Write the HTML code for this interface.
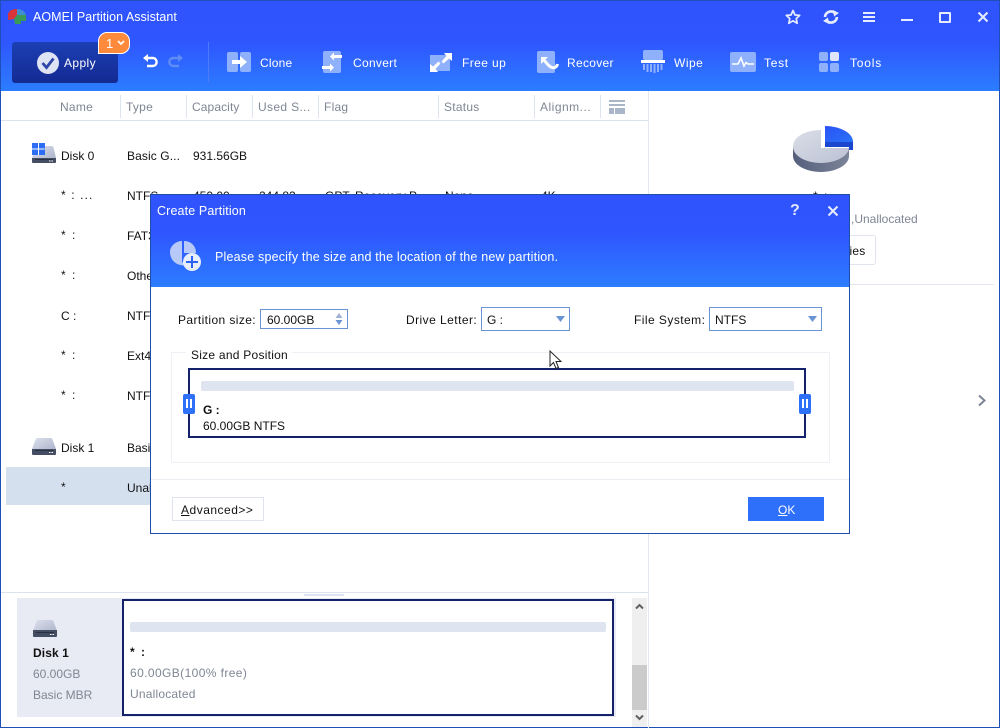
<!DOCTYPE html>
<html><head><meta charset="utf-8"><style>
html,body{margin:0;padding:0;background:#fff}
#r{position:relative;width:1000px;height:728px;overflow:hidden;background:#fff;font-family:"Liberation Sans",sans-serif;font-size:12px;color:#111}
#r div,#r span.t{position:absolute}
.t{white-space:nowrap;line-height:16px;height:16px}
.w{color:#fff}.g{color:#7f8694}.h{color:#7f8694;letter-spacing:.25px}
svg{position:absolute;overflow:visible}
.sep{width:1px;height:23px;top:95px;background:#dfe5f0}
</style></head><body><div id="r">
<!-- window frame -->
<div style="left:0;top:0;width:1000px;height:91px;background:linear-gradient(#2f54fd 0,#2f55ff 45%,#2c7dff 100%)"></div>
<div style="left:0;top:0;width:1000px;height:1px;background:#1c50b8"></div>
<div style="left:0;top:0;width:1px;height:728px;background:#1c50b8"></div>
<div style="left:999px;top:0;width:1px;height:728px;background:#1c50b8"></div>
<div style="left:0;top:727px;width:1000px;height:1px;background:#1c50b8"></div>

<svg style="left:7px;top:8px" width="20" height="17" viewBox="0 0 20 17"><path d="M1 12V7C1 3 5 1 10 1L10 7L7 11Z" fill="#d8343a"/><path d="M10 1C14 1 18 3 19 7L14 9L10 7Z" fill="#3f8fd0"/><path d="M7 11L10 7L14 7L19 7V13L14 13V16H8Z" fill="#3a9a58"/></svg>
<span class="t w" style="left:33px;top:9px;font-size:12.5px;letter-spacing:.03px">AOMEI Partition Assistant</span>

<!-- window controls -->
<svg style="left:785px;top:9px" width="16" height="16" viewBox="0 0 16 16"><path d="M8 1.5L10 6L14.7 6.4L11.2 9.6L12.2 14.3L8 11.8L3.8 14.3L4.8 9.6L1.3 6.4L6 6Z" fill="none" stroke="#e6ecff" stroke-width="1.7" stroke-linejoin="round"/></svg>
<svg style="left:823px;top:9px" width="16" height="16" viewBox="0 0 16 16"><path d="M2 8A6 6 0 0 1 12 4M14 8A6 6 0 0 1 4 12" fill="none" stroke="#e6ecff" stroke-width="2.6"/><path d="M10 1L16 4L11 7.500ZM6 15L0 12L5 8.500Z" fill="#e6ecff"/></svg>
<div style="left:863px;top:12px;width:12px;height:2px;background:#e6ecff"></div>
<div style="left:863px;top:16px;width:12px;height:2px;background:#e6ecff"></div>
<div style="left:863px;top:20px;width:12px;height:2px;background:#e6ecff"></div>
<div style="left:901px;top:19px;width:12px;height:2px;background:#e6ecff"></div>
<div style="left:939px;top:12px;width:8px;height:7px;border:2px solid #e6ecff;border-radius:1px"></div>
<svg style="left:977px;top:11px" width="12" height="12" viewBox="0 0 12 12"><path d="M1.500 1.500L10.500 10.500M10.500 1.500L1.500 10.500" stroke="#e6ecff" stroke-width="2"/></svg>

<!-- Apply -->
<div style="left:12px;top:42px;width:106px;height:41px;border-radius:3px;background:linear-gradient(#1c3fb4,#142a92)"></div>
<svg style="left:37px;top:52px" width="22" height="22" viewBox="0 0 22 22"><circle cx="11" cy="11" r="11" fill="#dfe4f4"/><path d="M5.500 11L9.500 15.500L16.500 6.500" fill="none" stroke="#2c46a8" stroke-width="2.800"/></svg>
<span class="t w" style="left:64px;top:55px;letter-spacing:.4px">Apply</span>
<div style="left:98px;top:32px;width:32px;height:22px;box-sizing:border-box;background:#ff8a3c;border:1.500px solid #fff;border-radius:9px 9px 9px 0"></div>
<span class="t w" style="left:106px;top:36px;font-size:13px">1</span>
<svg style="left:117px;top:40px" width="8" height="6" viewBox="0 0 8 6"><path d="M1 1L4 4L7 1" fill="none" stroke="#fff" stroke-width="1.800"/></svg>

<svg style="left:142px;top:54px" width="16" height="14" viewBox="0 0 16 14"><path d="M3 4H10.500C16 4 16 12 10.500 12H5" fill="none" stroke="#fff" stroke-width="2.400"/><path d="M1 4L6 0V8Z" fill="#fff"/></svg>
<svg style="left:168px;top:54px" width="16" height="14" viewBox="0 0 16 14"><path d="M13 4H5.500C0 4 0 12 5.500 12H11" fill="none" stroke="#5f8cf5" stroke-width="2.400"/><path d="M15 4L10 0V8Z" fill="#5f8cf5"/></svg>
<div style="left:208px;top:42px;width:1px;height:40px;background:#4d7bf5"></div>

<!-- toolbar icons -->
<svg style="left:227px;top:52px" width="24" height="20" viewBox="0 0 24 20"><rect x="0" y="0" width="11" height="20" rx="2" fill="#8fb0fb"/><rect x="13" y="0" width="11" height="20" rx="2" fill="#8fb0fb"/><path d="M5 8H13V4L20 10L13 16V12H5Z" fill="#fff"/></svg>
<span class="t w" style="left:260px;top:55px;letter-spacing:.2px">Clone</span>
<svg style="left:322px;top:51px" width="21" height="22" viewBox="0 0 21 22"><rect x="1" y="0" width="18" height="22" rx="2" fill="#8fb0fb"/><path d="M20 4H12V1.500L8 5.500L12 9.500V7H20Z" fill="#fff"/><path d="M0 15H8V12.500L12 16.500L8 20.500V18H0Z" fill="#fff"/></svg>
<span class="t w" style="left:353px;top:55px;letter-spacing:.3px">Convert</span>
<svg style="left:430px;top:53px" width="22" height="20" viewBox="0 0 22 20"><rect x="0" y="2" width="20" height="16" fill="#8fb0fb"/><path d="M14 0H22V8L19 5.500L13.500 10.500L11.500 8.500L16.500 3ZM0 19V11L3 13.500L8.500 8.500L10.500 10.500L5.500 16L8 19Z" fill="#fff"/></svg>
<span class="t w" style="left:462px;top:55px;letter-spacing:.4px">Free up</span>
<svg style="left:537px;top:51px" width="22" height="22" viewBox="0 0 22 22"><rect x="0" y="0" width="18" height="22" rx="2" fill="#8fb0fb"/><path d="M4 6H11L4 13Z" fill="#fff"/><path d="M6.500 8.500C9 11 11 15 15 16.500C18 17.500 20 15.500 20.500 13" fill="none" stroke="#fff" stroke-width="3"/></svg>
<span class="t w" style="left:567px;top:55px;letter-spacing:.3px">Recover</span>
<svg style="left:641px;top:50px" width="24" height="23" viewBox="0 0 24 23"><rect x="2" y="0" width="20" height="10" rx="2" fill="#8fb0fb"/><rect x="0" y="10" width="24" height="3" fill="#fff"/><path d="M3 14V20M6.500 14V22M10 14V22M13.500 14V23M17 14V22M20.500 14V20" stroke="#8fb0fb" stroke-width="2"/></svg>
<span class="t w" style="left:674px;top:55px;letter-spacing:.5px">Wipe</span>
<svg style="left:730px;top:52px" width="26" height="20" viewBox="0 0 26 20"><rect width="26" height="20" rx="2" fill="#8fb0fb"/><path d="M2 12H8L11 6L14 14L16 10.500L18 12H24" fill="none" stroke="#fff" stroke-width="1.600"/></svg>
<span class="t w" style="left:764px;top:55px;letter-spacing:.7px">Test</span>
<svg style="left:819px;top:52px" width="20" height="20" viewBox="0 0 20 20"><rect width="9" height="9" rx="2" fill="#8fb0fb"/><rect x="11" width="9" height="9" rx="2" fill="#dfe6fb"/><rect y="11" width="9" height="9" rx="2" fill="#8fb0fb"/><rect x="11" y="11" width="9" height="9" rx="2" fill="#8fb0fb"/></svg>
<span class="t w" style="left:850px;top:55px;letter-spacing:.8px">Tools</span>

<!-- header table -->
<span class="t h" style="left:60px;top:99px">Name</span>
<div class="sep" style="left:120px"></div><span class="t h" style="left:126px;top:99px">Type</span>
<div class="sep" style="left:186px"></div><span class="t h" style="left:192px;top:99px;letter-spacing:.1px">Capacity</span>
<div class="sep" style="left:252px"></div><span class="t h" style="left:258px;top:99px;letter-spacing:.35px">Used S...</span>
<div class="sep" style="left:318px"></div><span class="t h" style="left:324px;top:99px">Flag</span>
<div class="sep" style="left:438px"></div><span class="t h" style="left:444px;top:99px">Status</span>
<div class="sep" style="left:534px"></div><span class="t h" style="left:540px;top:99px;letter-spacing:.5px">Alignm...</span>
<div class="sep" style="left:600px"></div>
<div style="left:609px;top:100px;width:16px;height:2px;background:#a9b6c9"></div>
<div style="left:609px;top:104px;width:16px;height:2px;background:#a9b6c9"></div>
<div style="left:609px;top:108px;width:5px;height:6px;background:#a9b6c9"></div>
<div style="left:615px;top:108px;width:10px;height:6px;background:#a9b6c9"></div>
<div style="left:1px;top:120px;width:648px;height:1px;background:#dbe2ee"></div>
<div style="left:648px;top:91px;width:1px;height:637px;background:#e2e7f2"></div>

<!-- rows -->
<svg style="left:32px;top:143px" width="24" height="20" viewBox="0 0 24 20"><defs><linearGradient id="d" x1="0" y1="0" x2="1" y2="1"><stop offset="0" stop-color="#dde1ec"/><stop offset="1" stop-color="#a9b1c9"/></linearGradient></defs><path d="M12 3H19.500Q21 3 21.500 4.500L24 15V17H0V15L1 12H12Z" fill="url(#d)"/><path d="M0 15H24V19Q24 20 23 20H1Q0 20 0 19Z" fill="#454d63"/><rect x="3" y="16" width="18" height="1" fill="#2a3145"/><rect x="17" y="17.500" width="1.500" height="1" fill="#fff"/><rect x="19.500" y="17.500" width="1.500" height="1" fill="#fff"/><rect x="0" y="0" width="6" height="5.500" fill="#2d6df6"/><rect x="7" y="0" width="6" height="5.500" fill="#2d6df6"/><rect x="0" y="6.500" width="6" height="5.500" fill="#2d6df6"/><rect x="7" y="6.500" width="6" height="5.500" fill="#2d6df6"/></svg>
<span class="t" style="left:61px;top:148px">Disk 0</span>
<span class="t" style="left:127px;top:148px;letter-spacing:.1px">Basic G...</span>
<span class="t" style="left:193px;top:148px">931.56GB</span>
<span class="t" style="left:61px;top:187px;letter-spacing:1.100px">* : ...</span><span class="t" style="left:127px;top:188px">NTFS</span>
<span class="t" style="left:193px;top:188px">450.00</span><span class="t" style="left:259px;top:188px">244.82</span><span class="t" style="left:325px;top:188px">GPT, Recovery P...</span><span class="t" style="left:445px;top:188px">None</span><span class="t" style="left:541px;top:188px">4K</span>
<span class="t" style="left:61px;top:227px;letter-spacing:1.500px">* :</span><span class="t" style="left:127px;top:228px">FAT32</span>
<span class="t" style="left:61px;top:267px;letter-spacing:1.500px">* :</span><span class="t" style="left:127px;top:268px">Other</span>
<span class="t" style="left:61px;top:308px">C :</span><span class="t" style="left:127px;top:308px">NTFS</span>
<span class="t" style="left:61px;top:347px;letter-spacing:1.500px">* :</span><span class="t" style="left:127px;top:348px">Ext4</span>
<span class="t" style="left:61px;top:387px;letter-spacing:1.500px">* :</span><span class="t" style="left:127px;top:388px">NTFS</span>
<svg style="left:32px;top:438px" width="24" height="17" viewBox="0 0 24 17"><path d="M5.500 0H18.500Q20 0 20.500 1.500L24 11V13H0V11L3.500 1.500Q4 0 5.500 0Z" fill="url(#d)"/><path d="M0 11H24V16Q24 17 23 17H1Q0 17 0 16Z" fill="#454d63"/><rect x="3" y="12" width="18" height="1" fill="#2a3145"/><rect x="17" y="14" width="1.500" height="1" fill="#fff"/><rect x="19.500" y="14" width="1.500" height="1" fill="#fff"/></svg>
<span class="t" style="left:61px;top:440px">Disk 1</span><span class="t" style="left:127px;top:440px">Basic MBR</span>
<div style="left:6px;top:467px;width:145px;height:38px;background:#d5e0ef"></div>
<span class="t" style="left:61px;top:479px">*</span><span class="t" style="left:127px;top:480px">Unallocated</span>

<!-- right panel -->
<svg style="left:792px;top:125px" width="62" height="48" viewBox="0 0 62 48"><defs><linearGradient id="a" x1="0" x2="1"><stop offset="0" stop-color="#555f7c"/><stop offset="1" stop-color="#7c8499"/></linearGradient><linearGradient id="b" x1="0" y1="0" x2="1" y2="1"><stop offset="0" stop-color="#dadee8"/><stop offset="1" stop-color="#bcc2d4"/></linearGradient><linearGradient id="c" x1="0" y1="0" x2="1" y2="1"><stop offset="0" stop-color="#2b52f8"/><stop offset="1" stop-color="#2a72f5"/></linearGradient></defs><path d="M1 21V31C1 40 14 47 29 47C44 47 57 40 57 31V21Z" fill="url(#a)"/><path d="M29 5C13 5 1 12 1 21.500C1 31 14 38 29 38C44 38 57 31 57 22H29Z" fill="url(#b)"/><path d="M29 5H33V22H29Z" fill="#fff"/><path d="M29 22H57V23H29Z" fill="#fff"/><path d="M33 1C46 1 61 7 61 17H33Z" fill="url(#c)"/><path d="M33 17H61V25H57V22H33Z" fill="#1b47cf"/></svg>
<span class="t" style="left:813px;top:188px;letter-spacing:1.500px">* :</span>
<span class="t g" style="left:851px;top:211px">,Unallocated</span>
<div style="left:800px;top:235px;width:76px;height:30px;box-sizing:border-box;border:1px solid #dfe4ef;border-radius:3px"></div>
<span class="t" style="left:846px;top:243px;letter-spacing:.2px">ties</span>
<div style="left:850px;top:284px;width:144px;height:1px;background:#e2e7f2"></div>
<svg style="left:977px;top:394px" width="10" height="13" viewBox="0 0 10 13"><path d="M2 1.500L7.500 6.500L2 11.500" fill="none" stroke="#7d8696" stroke-width="2"/></svg>

<!-- bottom panel -->
<div style="left:1px;top:592px;width:647px;height:1px;background:#dbe2ee"></div>
<div style="left:304px;top:594px;width:40px;height:2px;background:#dfe5f0"></div>
<div style="left:17px;top:598px;width:599px;height:119px;background:#e8ebf3"></div>
<div style="left:122px;top:599px;width:492px;height:117px;box-sizing:border-box;border:2px solid #13226a;background:#fff"></div>
<svg style="left:33px;top:620px" width="24" height="17" viewBox="0 0 24 17"><path d="M5.500 0H18.500Q20 0 20.500 1.500L24 11V13H0V11L3.500 1.500Q4 0 5.500 0Z" fill="url(#d)"/><path d="M0 10H24V16Q24 17 23 17H1Q0 17 0 16Z" fill="#454d63"/><rect x="3" y="12" width="18" height="1" fill="#2a3145"/><rect x="17" y="14" width="1.500" height="1" fill="#fff"/><rect x="19.500" y="14" width="1.500" height="1" fill="#fff"/></svg>
<span class="t" style="left:33px;top:645px;font-weight:bold;letter-spacing:.1px">Disk 1</span>
<span class="t g" style="left:33px;top:666px">60.00GB</span>
<span class="t g" style="left:33px;top:687px">Basic MBR</span>
<div style="left:130px;top:622px;width:476px;height:10px;border-radius:2px;background:#dfe5f0"></div>
<span class="t" style="left:130px;top:644px;font-weight:bold;letter-spacing:1.500px">* :</span>
<span class="t g" style="left:130px;top:665px;letter-spacing:.4px">60.00GB(100% free)</span>
<span class="t g" style="left:130px;top:686px;letter-spacing:.2px">Unallocated</span>
<div style="left:632px;top:598px;width:15px;height:129px;background:#efefef"></div>
<div style="left:632px;top:665px;width:15px;height:45px;background:#cbcbcb"></div>
<svg style="left:635px;top:603px" width="9" height="7" viewBox="0 0 9 7"><path d="M1 5.500L4.500 2L8 5.500" fill="none" stroke="#606060" stroke-width="2"/></svg>
<svg style="left:635px;top:714px" width="9" height="7" viewBox="0 0 9 7"><path d="M1 1.500L4.500 5L8 1.500" fill="none" stroke="#606060" stroke-width="2"/></svg>

<!-- dialog -->
<div style="left:150px;top:194px;width:700px;height:340px;box-sizing:border-box;border:1px solid #1d4fa8;background:#fff"></div>
<div style="left:151px;top:195px;width:698px;height:92px;background:linear-gradient(#2f54fd 0,#2f55ff 40%,#2c7dff 100%)"></div>
<span class="t w" style="left:157px;top:203px;font-size:12.500px;letter-spacing:.13px">Create Partition</span>
<span class="t" style="left:790px;top:203px;color:#dfe6ff;font-size:16px;font-weight:bold">?</span>
<svg style="left:827px;top:205px" width="12" height="12" viewBox="0 0 12 12"><path d="M1.500 1.500L10.500 10.500M10.500 1.500L1.500 10.500" stroke="#e6ecff" stroke-width="2"/></svg>
<svg style="left:170px;top:240px" width="32" height="32" viewBox="0 0 32 32"><path d="M12 1V22L17 25C8 27 0 21 0 12C0 6 6 1 12 1Z" fill="#b6c9f8"/><path d="M14 1C21 1 26 6 26 13H14Z" fill="#b6c9f8"/><circle cx="22" cy="22" r="9" fill="#e8eefc"/><path d="M22 16V28M16 22H28" stroke="#2c62f0" stroke-width="2"/></svg>
<span class="t w" style="left:215px;top:249px;font-size:12.500px;letter-spacing:.19px">Please specify the size and the location of the new partition.</span>

<span class="t" style="left:178px;top:312px;letter-spacing:.4px">Partition size:</span>
<div style="left:260px;top:309px;width:88px;height:20px;box-sizing:border-box;border:1px solid #6a94d4"></div>
<span class="t" style="left:267px;top:312px">60.00GB</span>
<svg style="left:334px;top:312px" width="10" height="14" viewBox="0 0 10 14"><path d="M5 1L8.500 6H1.500Z" fill="#9fb2d3"/><path d="M5 13L8.500 8H1.500Z" fill="#6a94d4"/></svg>
<span class="t" style="left:406px;top:312px;letter-spacing:.45px">Drive Letter:</span>
<div style="left:481px;top:307px;width:89px;height:24px;box-sizing:border-box;border:1px solid #6a94d4"></div>
<span class="t" style="left:487px;top:312px">G :</span>
<svg style="left:556px;top:316px" width="9" height="6" viewBox="0 0 9 6"><path d="M0 0H9L4.500 6Z" fill="#6a94d4"/></svg>
<span class="t" style="left:634px;top:312px;letter-spacing:.45px">File System:</span>
<div style="left:709px;top:307px;width:113px;height:24px;box-sizing:border-box;border:1px solid #6a94d4"></div>
<span class="t" style="left:715px;top:312px">NTFS</span>
<svg style="left:808px;top:316px" width="9" height="6" viewBox="0 0 9 6"><path d="M0 0H9L4.500 6Z" fill="#6a94d4"/></svg>

<div style="left:171px;top:352px;width:659px;height:111px;box-sizing:border-box;border:1px solid #f0f1f6"></div>
<div style="left:186px;top:348px;width:106px;height:12px;background:#fff"></div>
<span class="t" style="left:191px;top:347px;letter-spacing:.25px">Size and Position</span>
<div style="left:188px;top:368px;width:618px;height:70px;box-sizing:border-box;border:2px solid #13226a;background:#fff"></div>
<div style="left:201px;top:381px;width:593px;height:10px;border-radius:2px;background:#dfe5f0"></div>
<span class="t" style="left:203px;top:402px;font-weight:bold">G :</span>
<span class="t" style="left:203px;top:418px">60.00GB NTFS</span>
<div style="left:183px;top:394px;width:12px;height:20px;border-radius:2px;background:#2f70f8"></div>
<div style="left:186px;top:399px;width:2px;height:9px;background:#fff"></div><div style="left:190px;top:399px;width:2px;height:9px;background:#fff"></div>
<div style="left:799px;top:394px;width:12px;height:20px;border-radius:2px;background:#2f70f8"></div>
<div style="left:802px;top:399px;width:2px;height:9px;background:#fff"></div><div style="left:806px;top:399px;width:2px;height:9px;background:#fff"></div>
<div style="left:151px;top:479px;width:698px;height:1px;background:#eaecf2"></div>
<div style="left:172px;top:497px;width:92px;height:24px;box-sizing:border-box;border:1px solid #dfe4ef"></div>
<span class="t" style="left:181px;top:502px;letter-spacing:.5px"><u>A</u>dvanced&gt;&gt;</span>
<div style="left:748px;top:497px;width:76px;height:24px;background:#2f70fb"></div>
<span class="t w" style="left:778px;top:502px"><u>O</u>K</span>

<!-- cursor -->
<svg style="left:549px;top:350px" width="13" height="20" viewBox="0 0 13 20"><path d="M1 1V16L4.500 12.500L7 18.500L9.500 17.500L7 11.500H12Z" fill="#fff" stroke="#222" stroke-width="1"/></svg>
</div></body></html>
